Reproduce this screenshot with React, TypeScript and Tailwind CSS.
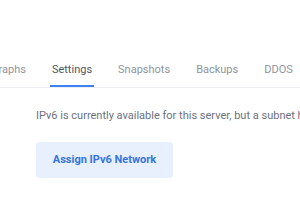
const tabs = ['Graphs', 'Settings', 'Snapshots', 'Backups', 'DDOS'];

export default function App() {
  return (
    <div className="w-[300px] h-[200px] overflow-hidden bg-white" style={{ fontFamily: 'Roboto, "Liberation Sans", sans-serif' }}>
      <div className="pt-[60px] border-b border-[#eceef1]">
        <div className="flex gap-[22px] -ml-[11px]">
          {tabs.map(tab => (
            <div
              key={tab}
              className={
                tab === 'Settings'
                  ? 'px-[2px] pb-[5px] text-[11px] leading-[20px] text-[#4f5563] border-b-2 border-[#3b82f6] whitespace-nowrap'
                  : 'px-[2px] pb-[5px] text-[11px] leading-[20px] text-[#8f949d] border-b-2 border-transparent whitespace-nowrap'
              }
            >
              {tab}
            </div>
          ))}
        </div>
      </div>
      <div className="pl-[36px] pt-[20px]">
        <p className="text-[11px] leading-[16px] text-[#6b7280] whitespace-nowrap">
          IPv6 is currently available for this server, but a subnet has not been assigned yet.
        </p>
        <button className="mt-[18px] w-[137px] h-[36px] rounded-[3px] bg-[#e8f0fd] text-[#3575e0] text-[11px] font-bold">
          Assign IPv6 Network
        </button>
      </div>
    </div>
  );
}
